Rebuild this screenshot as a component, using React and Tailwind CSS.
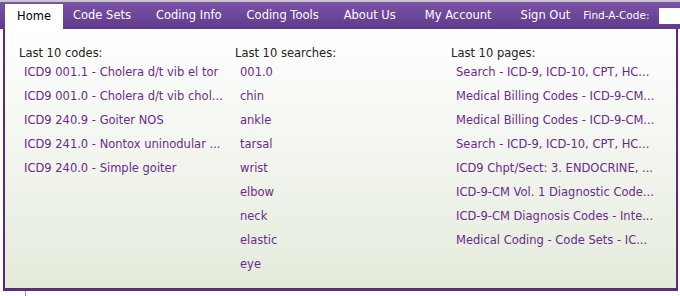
import React from "react";

const codes = [
  "ICD9 001.1 - Cholera d/t vib el tor",
  "ICD9 001.0 - Cholera d/t vib chol...",
  "ICD9 240.9 - Goiter NOS",
  "ICD9 241.0 - Nontox uninodular ...",
  "ICD9 240.0 - Simple goiter",
];

const searches = ["001.0", "chin", "ankle", "tarsal", "wrist", "elbow", "neck", "elastic", "eye"];

const pages = [
  "Search - ICD-9, ICD-10, CPT, HC...",
  "Medical Billing Codes - ICD-9-CM...",
  "Medical Billing Codes - ICD-9-CM...",
  "Search - ICD-9, ICD-10, CPT, HC...",
  "ICD9 Chpt/Sect: 3. ENDOCRINE, ...",
  "ICD-9-CM Vol. 1 Diagnostic Code...",
  "ICD-9-CM Diagnosis Codes - Inte...",
  "Medical Coding - Code Sets - IC...",
];

// spacing between menu labels, taken from the screenshot
const navItems = [
  { label: "Code Sets", cls: "ml-[10px]" },
  { label: "Coding Info", cls: "ml-[25px]" },
  { label: "Coding Tools", cls: "ml-[25px]" },
  { label: "About Us", cls: "ml-[25px]" },
  { label: "My Account", cls: "ml-[29px]" },
  { label: "Sign Out", cls: "ml-[29px]" },
];

function Column({ title, items }) {
  return (
    <div className="w-[216px] shrink-0">
      <div className="h-[14px] leading-[15px] text-[#222]">{title}</div>
      <ul className="pl-[5px]">
        {items.map((it, i) => (
          <li key={i} className="h-[24px] leading-[24px] text-[#6b2a8c] whitespace-nowrap">
            {it}
          </li>
        ))}
      </ul>
    </div>
  );
}

export default function App() {
  return (
    <div className="w-[680px] h-[296px] bg-white overflow-hidden text-[11.5px] font-['DejaVu_Sans',sans-serif]">
      <div className="h-[2px] bg-[#c9c4cf]" />
      <div className="h-[27px] flex items-end bg-gradient-to-b from-[#7b53a6] to-[#5f3a8c] overflow-hidden">
        <div className="ml-[5px] w-[58px] shrink-0 h-[25px] bg-white flex items-center justify-center text-black">
          Home
        </div>
        <div className="flex h-full items-center text-white shrink-0 pt-[1px]">
          {navItems.map((n) => (
            <span key={n.label} className={`${n.cls} whitespace-nowrap`}>{n.label}</span>
          ))}
          <span className="ml-[13px] text-[10.5px] whitespace-nowrap">Find-A-Code:</span>
          <div className="ml-[10px] w-[30px] h-[16px] bg-white" />
        </div>
      </div>
      <div className="ml-[3px] w-[675px] h-[262px] border-l-[2px] border-r-[2px] border-b-[3px] border-[#5c2a79] bg-gradient-to-b from-white to-[#e4ebdc] flex pl-[14px] pt-[17px]">
        <Column title="Last 10 codes:" items={codes} />
        <Column title="Last 10 searches:" items={searches} />
        <Column title="Last 10 pages:" items={pages} />
      </div>
      <div className="ml-[25px] w-px h-[6px] bg-[#9a9a9a]" />
    </div>
  );
}
